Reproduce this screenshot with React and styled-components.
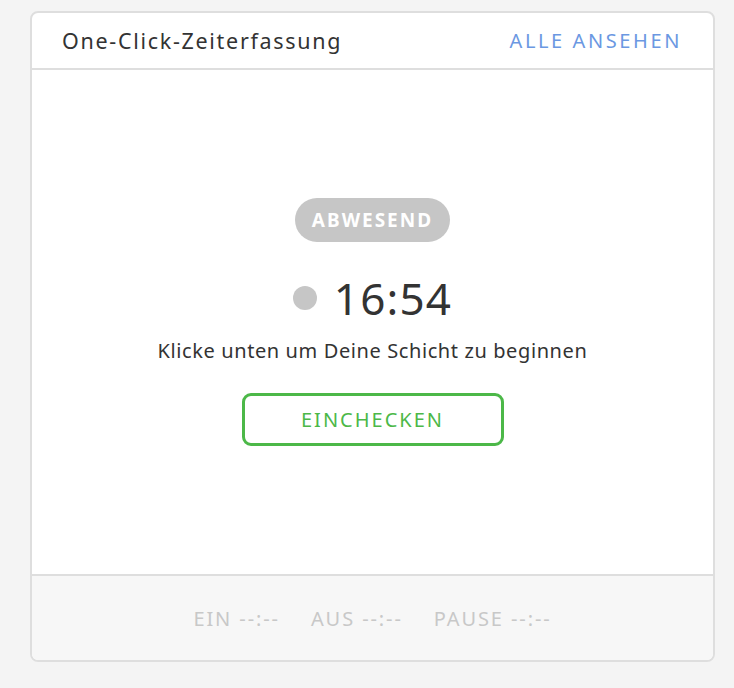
import React from 'react'
import styled, {createGlobalStyle} from 'styled-components'

const GlobalStyle = createGlobalStyle`
  html, body {
    margin: 0;
    padding: 0;
    background: #f4f4f4;
  }
  body {
    font-family: "Noto Sans", "Open Sans", sans-serif;
  }
`

const Page = styled.div`
  padding: 11px 0 0 30px;
  width: 734px;
  height: 688px;
  box-sizing: border-box;
`

const Card = styled.div`
  width: 685px;
  height: 651px;
  box-sizing: border-box;
  border: 2px solid #dedede;
  border-radius: 8px;
  background: #fff;
  display: flex;
  flex-direction: column;
  overflow: hidden;
`

const Header = styled.div`
  height: 57px;
  box-sizing: border-box;
  border-bottom: 2px solid #dedede;
  display: flex;
  align-items: center;
  justify-content: space-between;
  padding: 0 31px 0 30px;
`

const Title = styled.h2`
  margin: 0;
  font-weight: 400;
  font-size: 21.5px;
  letter-spacing: 1.7px;
  color: #333;
`

const Link = styled.a`
  font-size: 20px;
  color: #6b98e2;
  letter-spacing: 2.6px;
  text-decoration: none;
  cursor: pointer;
`

const Body = styled.div`
  flex: 1;
  display: flex;
  flex-direction: column;
  align-items: center;
  justify-content: center;
`

const Badge = styled.span`
  height: 44px;
  padding: 0 17px;
  border-radius: 22px;
  background: #c6c6c6;
  color: #fff;
  font-weight: 700;
  font-size: 19px;
  letter-spacing: 2px;
  display: flex;
  align-items: center;
`

const Clock = styled.div`
  margin-top: 29px;
  display: flex;
  align-items: center;
  gap: 17px;
  font-size: 44px;
  letter-spacing: 1.2px;
  color: #333;
  line-height: 54px;
  height: 54px;
`

const Dot = styled.span`
  width: 24px;
  height: 24px;
  border-radius: 50%;
  background: ${p => p.color};
`

const Hint = styled.p`
  margin: 14px 0 0;
  font-size: 20px;
  letter-spacing: 0.6px;
  line-height: 24px;
  color: #333;
`

const CheckIn = styled.button`
  margin-top: 30px;
  width: 262px;
  height: 53px;
  border: 3px solid #4cb848;
  border-radius: 9px;
  background: #fff;
  color: #4cb848;
  font-family: inherit;
  font-size: 20px;
  letter-spacing: 2px;
  cursor: pointer;
`

const Footer = styled.div`
  height: 86px;
  box-sizing: border-box;
  border-top: 2px solid #dedede;
  background: #f7f7f7;
  display: flex;
  align-items: center;
  justify-content: center;
  gap: 31px;
`

const Stat = styled.span`
  font-size: 20px;
  letter-spacing: 1.9px;
  color: #c8c8c8;
`

const stats = [
  {label: 'EIN', value: '--:--'},
  {label: 'AUS', value: '--:--'},
  {label: 'PAUSE', value: '--:--'},
]

export default function App() {
  return (
    <Page>
      <GlobalStyle />
      <Card>
        <Header>
          <Title>One-Click-Zeiterfassung</Title>
          <Link>ALLE ANSEHEN</Link>
        </Header>
        <Body>
          <Badge>ABWESEND</Badge>
          <Clock>
            <Dot color="#c6c6c6" />
            16:54
          </Clock>
          <Hint>Klicke unten um Deine Schicht zu beginnen</Hint>
          <CheckIn>EINCHECKEN</CheckIn>
        </Body>
        <Footer>
          {stats.map(s => (
            <Stat key={s.label}>{s.label} {s.value}</Stat>
          ))}
        </Footer>
      </Card>
    </Page>
  )
}
